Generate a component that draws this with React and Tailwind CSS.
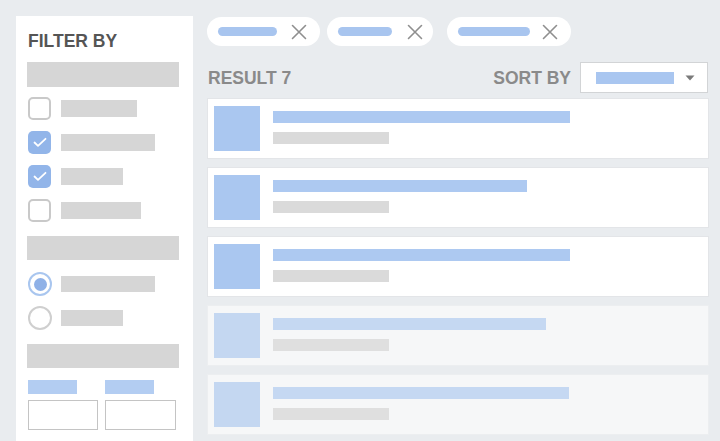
import React from "react";

const font = { fontFamily: '"Liberation Sans", Arial, sans-serif' };

const Checkbox = ({ checked }) =>
  checked ? (
    <div className="flex h-[23px] w-[23px] items-center justify-center rounded-[5px] bg-[#92b5e9]">
      <svg width="14" height="11" viewBox="0 0 14 11" fill="none">
        <path d="M1.5 5.5 L5 8.8 L12.5 1.8" stroke="#fff" strokeWidth="1.8" strokeLinecap="round" strokeLinejoin="round" />
      </svg>
    </div>
  ) : (
    <div className="h-[23px] w-[23px] rounded-[5px] border-2 border-[#c9c9c9] bg-white" />
  );

const Radio = ({ checked }) =>
  checked ? (
    <div className="flex h-[24px] w-[24px] items-center justify-center rounded-full border-2 border-[#a9c6ef] bg-white">
      <div className="h-[13px] w-[13px] rounded-full bg-[#8fb1e7]" />
    </div>
  ) : (
    <div className="h-[24px] w-[24px] rounded-full border-2 border-[#cfcfcf] bg-white" />
  );

const Chip = ({ width, pill, gapX }) => (
  <div
    className="flex h-[29px] items-center rounded-full bg-white pl-[11px]"
    style={{ width }}
  >
    <div className="h-[9px] rounded-full bg-[#a8c5ef]" style={{ width: pill }} />
    <svg width="16" height="16" viewBox="0 0 16 16" style={{ marginLeft: gapX }}>
      <path d="M1.5 1.5 L14.5 14.5 M14.5 1.5 L1.5 14.5" stroke="#8f8f8f" strokeWidth="1.6" strokeLinecap="round" />
    </svg>
  </div>
);

const cards = [
  { title: 297, faded: false },
  { title: 254, faded: false },
  { title: 297, faded: false },
  { title: 273, faded: true },
  { title: 296, faded: true },
];

export default function App() {
  return (
    <div className="flex h-[441px] w-[720px] gap-[14px] overflow-hidden bg-[#e9ecef] pl-4 pt-4" style={font}>
      {/* filter sidebar */}
      <aside className="flex h-[460px] w-[177px] shrink-0 flex-col bg-white pl-[11px] pr-[14px] pt-[15px]">
        <h2 className="ml-[1px] text-[17.5px] font-bold leading-[20px] text-[#555]">FILTER BY</h2>
        <div className="mt-[11px] h-[25px] bg-[#d6d6d6]" />

        <div className="mt-[10px] flex flex-col gap-[11px] pl-[1px]">
          {[
            [false, 76],
            [true, 94],
            [true, 62],
            [false, 80],
          ].map(([checked, w], i) => (
            <div key={i} className="flex h-[23px] items-center gap-[10px]">
              <Checkbox checked={checked} />
              <div className="h-[17px] bg-[#d6d6d6]" style={{ width: w }} />
            </div>
          ))}
        </div>

        <div className="mt-[14px] h-[24px] bg-[#d6d6d6]" />

        <div className="mt-[12px] flex flex-col gap-[10px] pl-[1px]">
          {[
            [true, 94],
            [false, 62],
          ].map(([checked, w], i) => (
            <div key={i} className="flex h-[24px] items-center gap-[9px]">
              <Radio checked={checked} />
              <div className="h-[16px] bg-[#d6d6d6]" style={{ width: w }} />
            </div>
          ))}
        </div>

        <div className="mt-[14px] h-[24px] bg-[#d6d6d6]" />

        <div className="mt-[12px] flex gap-[7px] pl-[1px]">
          <div className="flex flex-col gap-[6px]">
            <div className="h-[14px] w-[49px] bg-[#b3cdf2]" />
            <div className="h-[30px] w-[70px] border border-[#c4c4c4] bg-white" />
          </div>
          <div className="flex flex-col gap-[6px]">
            <div className="h-[14px] w-[49px] bg-[#b3cdf2]" />
            <div className="h-[30px] w-[71px] border border-[#c4c4c4] bg-white" />
          </div>
        </div>
      </aside>

      {/* results */}
      <main className="flex w-[502px] flex-col pt-[1px]">
        <div className="flex items-center">
          <Chip width={113} pill={59} gapX={14} />
          <div className="w-[7px]" />
          <Chip width={106} pill={54} gapX={15} />
          <div className="w-[14px]" />
          <Chip width={124} pill={72} gapX={12} />
        </div>

        <div className="mt-[16px] flex h-[31px] items-center pl-[1px]">
          <span className="text-[17.5px] font-bold leading-[20px] text-[#8a8a8a]">RESULT 7</span>
          <span className="ml-auto text-[17.5px] font-bold leading-[20px] text-[#8a8a8a]">SORT BY</span>
          <div className="ml-[9px] mr-[1px] flex h-[31px] w-[128px] items-center border border-[#d2d4d6] bg-white pl-[15px]">
            <div className="h-[12px] w-[78px] bg-[#a9c6f0]" />
            <svg className="ml-[11px]" width="10" height="6" viewBox="0 0 10 6">
              <path d="M0.5 0.5 L9.5 0.5 L5 5.5 Z" fill="#7a7a7a" />
            </svg>
          </div>
        </div>

        <div className="mt-[5px] flex flex-col gap-2">
          {cards.map((c, i) => (
            <div
              key={i}
              className={`flex h-[61px] border pl-[6px] pt-[7px] ${
                c.faded ? "border-[#eceef0] bg-[#f6f7f8]" : "border-[#e3e5e8] bg-white"
              }`}
            >
              <div className={`h-[45px] w-[46px] ${c.faded ? "bg-[#c4d7f1]" : "bg-[#aac7f0]"}`} />
              <div className="ml-[13px] flex flex-col pt-[5px]">
                <div
                  className={`h-[12px] ${c.faded ? "bg-[#c5d8f2]" : "bg-[#adc9f1]"}`}
                  style={{ width: c.title }}
                />
                <div className={`mt-[9px] h-[12px] w-[116px] ${c.faded ? "bg-[#dfdfdf]" : "bg-[#dadada]"}`} />
              </div>
            </div>
          ))}
        </div>
      </main>
    </div>
  );
}
